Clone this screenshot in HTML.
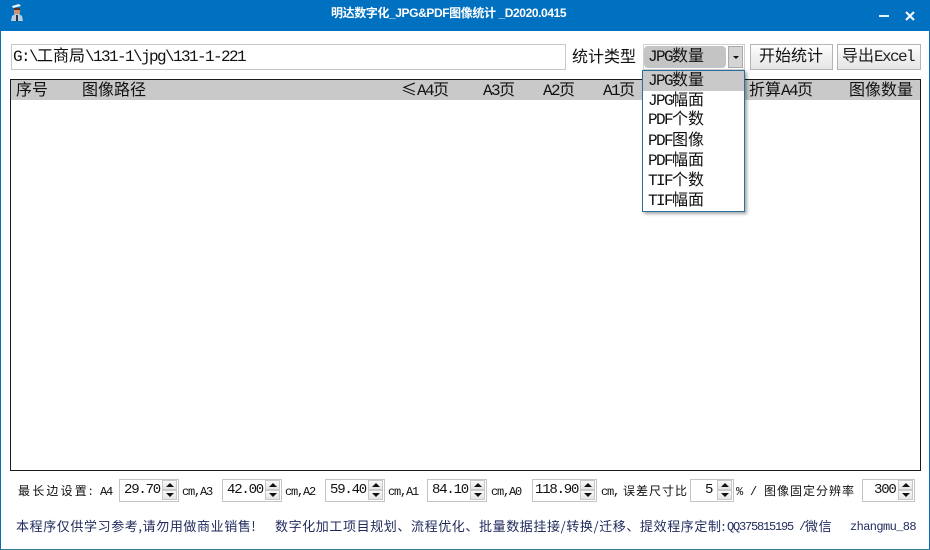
<!DOCTYPE html>
<html><head><meta charset="utf-8">
<style>
html,body{margin:0;padding:0;background:#fff}
#w{position:relative;width:930px;height:550px;overflow:hidden;background:#fff;font-family:"WenQuanYi Zen Hei","Noto Sans CJK SC",sans-serif;color:#111}
#w div,#w svg{position:absolute}
.t{white-space:nowrap;font-size:16px;line-height:20px;margin-top:-2px}
.t b{font:normal 16px/20px "Liberation Mono",monospace;letter-spacing:-1.6px}
.s{white-space:nowrap;font-size:12px;line-height:16px;letter-spacing:1px}
.s b{font:normal 12px/16px "Liberation Mono",monospace;letter-spacing:-1.2px}
.box{border:1px solid #c4c4c4;background:#fff;box-sizing:border-box;height:23px;top:479px}
.val{top:1px;font:14px/18px "Liberation Mono",monospace;white-space:nowrap;letter-spacing:-1.2px}
.up,.dn{right:1px;width:15px;height:10px;background:linear-gradient(#fafafa,#e4e4e4);border:1px solid #c8c8c8;box-sizing:border-box}
.up{top:0}.dn{top:10px}
.up:after,.dn:after{content:"";position:absolute;left:3px;border-left:4px solid transparent;border-right:4px solid transparent}
.up:after{top:2px;border-bottom:4px solid #111}
.dn:after{top:2px;border-top:4px solid #111}
.btn{top:44px;height:26px;box-sizing:border-box;border:1px solid #b4b4b4;background:linear-gradient(#fff,#f0f0f0 50%,#e6e6e6)}
.it{left:648px}
.n{color:#1f2a5c;font-size:13px;letter-spacing:.6px}
</style></head><body>
<div id="w">
<div style="left:0;top:0;width:930px;height:31px;background:#0070c0"></div>
<div style="left:0;top:31px;width:1px;height:519px;background:#0a6fb5"></div>
<div style="left:929px;top:31px;width:1px;height:519px;background:#0a6fb5"></div>
<div style="left:0;top:549px;width:930px;height:1px;background:#2c7a96"></div>

<svg style="left:9px;top:3px" width="16" height="20" viewBox="0 0 16 20"><path d="M3 3l7-2 2 2-8 2z" fill="#f2f6fa"/><path d="M5 5h6v5l-1 2H6L5 10z" fill="#d09070"/><path d="M5 5h6v2H5z" fill="#5a3020"/><path d="M2 18l1-5 3-2h4l3 2 1 5z" fill="#b8cde0"/><path d="M7 12h2v6H7z" fill="#27384e"/></svg>
<div style="left:331px;top:5px;color:#fff;font:bold 12px/16px 'Liberation Sans','Noto Sans CJK SC',sans-serif;white-space:nowrap;letter-spacing:-.4px">明达数字化_JPG&amp;PDF图像统计 _D2020.0415</div>
<div style="left:879px;top:15px;width:10px;height:2px;background:#e8f2fa"></div>
<svg style="left:904px;top:10px" width="12" height="12" viewBox="0 0 12 12"><path d="M2 2l8 8M10 2l-8 8" stroke="#f4f9fd" stroke-width="2.2" fill="none"/></svg>

<div style="left:11px;top:44px;width:555px;height:26px;box-sizing:border-box;border:1px solid #c8c8c8"></div>
<div class="t" style="left:13px;top:46px"><b>G:\</b>工商局<b>\131-1\jpg\131-1-221</b></div>
<div class="t" style="left:572px;top:47px">统计类型</div>

<div style="left:643px;top:44px;width:102px;height:26px;box-sizing:border-box;border:1px solid #d0d0d0"></div>
<div style="left:644px;top:46px;width:82px;height:22px;background:#c4c4c4;border-radius:4px"></div>
<div class="t" style="left:648px;top:46px"><b>JPG</b>数量</div>
<div style="left:728px;top:46px;width:15px;height:22px;box-sizing:border-box;background:#d4d4d4;border:1px solid #aaa"></div>
<div style="left:733px;top:56px;width:0;height:0;border-left:3px solid transparent;border-right:3px solid transparent;border-top:3px solid #111"></div>

<div class="btn" style="left:750px;width:83px"></div>
<div class="t" style="left:759px;top:46px">开始统计</div>
<div class="btn" style="left:837px;width:84px"></div>
<div class="t" style="left:842px;top:46px;color:#222">导出<b>Excel</b></div>

<div style="left:10px;top:79px;width:911px;height:392px;box-sizing:border-box;border:1px solid #1a1a1a"></div>
<div style="left:11px;top:80px;width:909px;height:20px;background:#c9c9c9"></div>
<div class="t" style="left:16px;top:80px">序号</div>
<div class="t" style="left:82px;top:80px">图像路径</div>
<div class="t" style="left:401px;top:80px">≤<b>A4</b>页</div>
<div class="t" style="left:483px;top:80px"><b>A3</b>页</div>
<div class="t" style="left:543px;top:80px"><b>A2</b>页</div>
<div class="t" style="left:603px;top:80px"><b>A1</b>页</div>
<div class="t" style="left:749px;top:80px">折算<b>A4</b>页</div>
<div class="t" style="left:849px;top:80px">图像数量</div>

<div style="left:642px;top:70px;width:103px;height:142px;box-sizing:border-box;background:#fff;border:1px solid #2b6f9e;box-shadow:2px 2px 3px rgba(0,0,0,.35)"></div>
<div style="left:643px;top:71px;width:101px;height:20px;background:#c9c9c9"></div>
<div class="t it" style="top:70px"><b>JPG</b>数量</div>
<div class="t it" style="top:90px"><b>JPG</b>幅面</div>
<div class="t it" style="top:109px"><b>PDF</b>个数</div>
<div class="t it" style="top:130px"><b>PDF</b>图像</div>
<div class="t it" style="top:150px"><b>PDF</b>幅面</div>
<div class="t it" style="top:170px"><b>TIF</b>个数</div>
<div class="t it" style="top:190px"><b>TIF</b>幅面</div>

<div class="s" style="left:18px;top:483px;letter-spacing:2.2px">最长边设置:</div>
<div class="s" style="left:100px;top:483px"><b>A4</b></div>
<div class="box" style="left:119px;width:60px"><div class="val" style="left:4px">29.70</div><div class="up"></div><div class="dn"></div></div>
<div class="s" style="left:182px;top:483px"><b>cm,A3</b></div>
<div class="box" style="left:222px;width:60px"><div class="val" style="left:4px">42.00</div><div class="up"></div><div class="dn"></div></div>
<div class="s" style="left:285px;top:483px"><b>cm,A2</b></div>
<div class="box" style="left:325px;width:60px"><div class="val" style="left:4px">59.40</div><div class="up"></div><div class="dn"></div></div>
<div class="s" style="left:388px;top:483px"><b>cm,A1</b></div>
<div class="box" style="left:427px;width:60px"><div class="val" style="left:4px">84.10</div><div class="up"></div><div class="dn"></div></div>
<div class="s" style="left:491px;top:483px"><b>cm,A0</b></div>
<div class="box" style="left:532px;width:65px"><div class="val" style="left:2px">118.90</div><div class="up"></div><div class="dn"></div></div>
<div class="s" style="left:601px;top:483px"><b>cm,</b></div>
<div class="s" style="left:623px;top:483px">误差尺寸比</div>
<div class="box" style="left:690px;width:44px"><div class="val" style="left:14px">5</div><div class="up"></div><div class="dn"></div></div>
<div class="s" style="left:736px;top:483px"><b>%</b></div>
<div class="s" style="left:750px;top:483px"><b>/</b></div>
<div class="s" style="left:764px;top:483px">图像固定分辨率</div>
<div class="box" style="left:862px;width:53px"><div class="val" style="left:11px">300</div><div class="up"></div><div class="dn"></div></div>

<div class="s n" style="left:16px;top:518px">本程序仅供学习参考,请勿用做商业销售!</div>
<div class="s n" style="left:275px;top:518px">数字化加工项目规划、流程优化、批量数据挂接/转换/迁移、提效程序定制:</div>
<div class="s" style="left:727px;top:518px;color:#1f2a5c"><b>QQ375815195 /</b></div>
<div class="s n" style="left:805px;top:518px">微信</div>
<div class="s" style="left:850px;top:518px;color:#1f2a5c"><b style="letter-spacing:-.6px">zhangmu_88</b></div>
</div>
</body></html>
